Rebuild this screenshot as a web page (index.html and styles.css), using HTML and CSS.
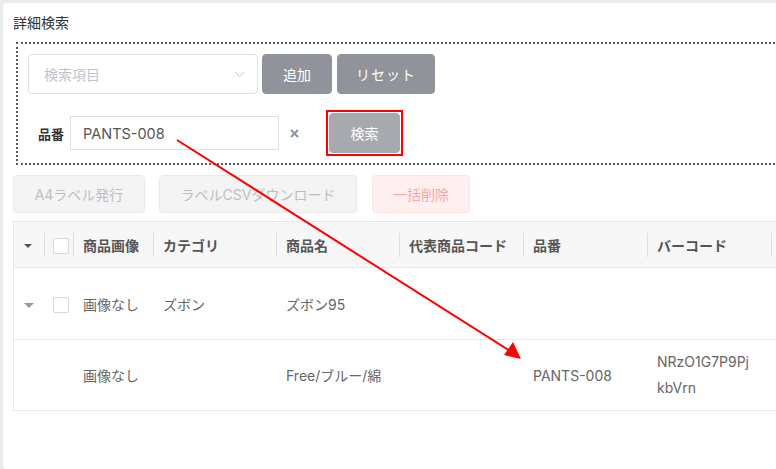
FILE: index.html
```html
<!DOCTYPE html>
<html lang="ja">
 <head>
  <meta charset="UTF-8">
  <title>詳細検索</title>
  <meta name="viewport" content="width=device-width, initial-scale=1.0">
  <link rel="stylesheet" href="styles.css">
 </head>
 <body>
  <div class="card">
   <h2 class="title">詳細検索</h2>

   <div class="search-box">
    <div class="search-row">
     <div class="select">
      <span class="placeholder">検索項目</span>
      <svg class="chevron" width="11" height="7" viewBox="0 0 11 7"><polyline points="1,1 5.5,5.5 10,1" fill="none" stroke="#c0c4cc" stroke-width="1"/></svg>
     </div>
     <button class="btn btn-info btn-add">追加</button>
     <button class="btn btn-info btn-reset">リセット</button>
    </div>
    <div class="cond-row">
     <label class="cond-label">品番</label>
     <input class="cond-input" type="text" value="PANTS-008">
     <svg class="remove" width="9" height="9" viewBox="0 0 9 9"><path d="M1 1 L8 8 M8 1 L1 8" stroke="#8a94a6" stroke-width="2"/></svg>
     <span class="highlight"><button class="btn btn-search">検索</button></span>
    </div>
   </div>

   <div class="actions">
    <button class="btn btn-disabled btn-a4">A4ラベル発行</button>
    <button class="btn btn-disabled btn-csv">ラベルCSVダウンロード</button>
    <button class="btn btn-danger-disabled btn-del">一括削除</button>
   </div>

   <table class="items">
    <colgroup>
     <col style="width:30px"><col style="width:29px"><col style="width:80px">
     <col style="width:123px"><col style="width:123px"><col style="width:124px">
     <col style="width:124px"><col style="width:124px"><col style="width:150px">
    </colgroup>
    <thead>
     <tr>
      <th class="c-caret"><span class="caret caret-head"></span></th>
      <th class="c-check"><span class="checkbox"></span></th>
      <th>商品画像</th>
      <th>カテゴリ</th>
      <th>商品名</th>
      <th>代表商品コード</th>
      <th>品番</th>
      <th>バーコード</th>
      <th></th>
     </tr>
    </thead>
    <tbody>
     <tr class="parent">
      <td class="c-caret"><span class="caret"></span></td>
      <td class="c-check"><span class="checkbox"></span></td>
      <td>画像なし</td>
      <td>ズボン</td>
      <td>ズボン95</td>
      <td></td>
      <td></td>
      <td></td>
      <td></td>
     </tr>
     <tr class="child">
      <td></td>
      <td></td>
      <td>画像なし</td>
      <td></td>
      <td>Free/ブルー/綿</td>
      <td></td>
      <td>PANTS-008</td>
      <td class="barcode">NRzO1G7P9PjkbVrn</td>
      <td></td>
     </tr>
    </tbody>
   </table>
  </div>

  <!-- annotation arrow -->
  <svg class="arrow" width="776" height="469" viewBox="0 0 776 469">
   <line x1="177" y1="140" x2="510" y2="351" stroke="#ff0000" stroke-width="2"/>
   <polygon points="521,359 504,355 513,342" fill="#ff0000"/>
  </svg>
 </body>
</html>
```

FILE: styles.css
```css
html, body {
  margin: 0;
  height: 100%;
}
body {
  position: relative;
  background: #ebebeb;
  padding: 3px 0 0 3px;
  box-sizing: border-box;
  overflow: hidden;
  font-family: Inter, 'Noto Sans CJK JP', sans-serif;
  font-size: 14px;
  color: #606266;
}
.card {
  width: 1000px;
  height: 100%;
  box-sizing: border-box;
  background: #fff;
  border-radius: 4px;
  padding: 11px 0 0 10px;
}
.title {
  margin: 0;
  font-size: 14px;
  line-height: 18px;
  font-weight: normal;
  color: #333;
}
.search-box {
  margin: 10px 0 0 3px;
  border: 2px dotted #5a5a5a;
  padding: 10px 0 7px 10px;
}
.search-row {
  display: flex;
  align-items: center;
  height: 40px;
}
.select {
  width: 230px;
  height: 40px;
  box-sizing: border-box;
  border: 1px solid #dcdfe6;
  border-radius: 4px;
  display: flex;
  align-items: center;
  justify-content: space-between;
  padding: 0 12px 0 15px;
  margin-right: 4px;
}
.placeholder {
  color: #c0c4cc;
}
.btn {
  font-family: inherit;
  font-size: 14px;
  border-radius: 4px;
  box-sizing: border-box;
  padding: 0;
  cursor: pointer;
}
.btn-info {
  height: 40px;
  background: #909399;
  border: 1px solid #909399;
  color: #fff;
}
.btn-add {
  width: 70px;
  margin-right: 5px;
}
.btn-reset {
  width: 98px;
  letter-spacing: 1px;
}
.cond-row {
  display: flex;
  align-items: center;
  height: 46px;
  margin-top: 16px;
  padding-left: 10px;
}
.cond-label {
  font-size: 13px;
  font-weight: bold;
  color: #333;
  margin-right: 6px;
}
.cond-input {
  width: 209px;
  height: 34px;
  box-sizing: border-box;
  border: 1px solid #dcdfe6;
  padding: 0 12px;
  font-family: inherit;
  font-size: 14.5px;
  color: #555;
  outline: none;
}
.remove {
  margin-left: 11px;
}
.highlight {
  display: inline-flex;
  margin-left: 27px;
  border: 2px solid #ff0000;
  padding: 1px;
  background: #fff;
}
.btn-search {
  width: 71px;
  height: 40px;
  background: #a6a9ad;
  border: 1px solid #a6a9ad;
  color: #fff;
}
.actions {
  display: flex;
  margin-top: 10px;
  height: 38px;
}
.btn-disabled {
  height: 38px;
  background: #f4f4f5;
  border: 1px solid #e9e9eb;
  color: #bcbec2;
}
.btn-danger-disabled {
  height: 38px;
  background: #fef0f0;
  border: 1px solid #fde2e2;
  color: #f9a7a7;
}
.btn-a4 {
  width: 132px;
  margin-right: 14px;
}
.btn-csv {
  width: 198px;
  margin-right: 15px;
}
.btn-del {
  width: 98px;
}
.items {
  margin-top: 8px;
  table-layout: fixed;
  border-collapse: separate;
  border-spacing: 0;
  border: 1px solid #e8e8e8;
  border-bottom: none;
  width: 877px;
}
.items th,
.items td {
  border-bottom: 1px solid #e8e8e8;
  padding: 0 0 0 10px;
  text-align: left;
  white-space: nowrap;
}
.items th {
  position: relative;
  height: 45px;
  background: #f7f7f7;
  color: #555;
  font-weight: bold;
}
.items th + th::before {
  content: "";
  position: absolute;
  left: 0;
  top: 11px;
  height: 24px;
  width: 1px;
  background: #dedede;
}
.items td {
  color: #666;
}
.parent td {
  height: 71px;
}
.child td {
  height: 70px;
}
.items .c-caret {
  padding-left: 10px;
}
.items .c-check {
  padding-left: 9px;
}
.items td.barcode {
  white-space: normal;
  word-break: break-all;
  padding-right: 19px;
  line-height: 26px;
}
.caret {
  display: inline-block;
  width: 0;
  height: 0;
  border-left: 5.5px solid transparent;
  border-right: 5.5px solid transparent;
  border-top: 5px solid #999;
  vertical-align: middle;
}
.caret-head {
  border-left-width: 4px;
  border-right-width: 4px;
  border-top: 4px solid #555;
}
.checkbox {
  display: inline-block;
  width: 16px;
  height: 16px;
  box-sizing: border-box;
  border: 1px solid #d3d7df;
  border-radius: 2px;
  background: #fff;
  vertical-align: middle;
}
.arrow {
  position: absolute;
  left: 0;
  top: 0;
  pointer-events: none;
}
```
